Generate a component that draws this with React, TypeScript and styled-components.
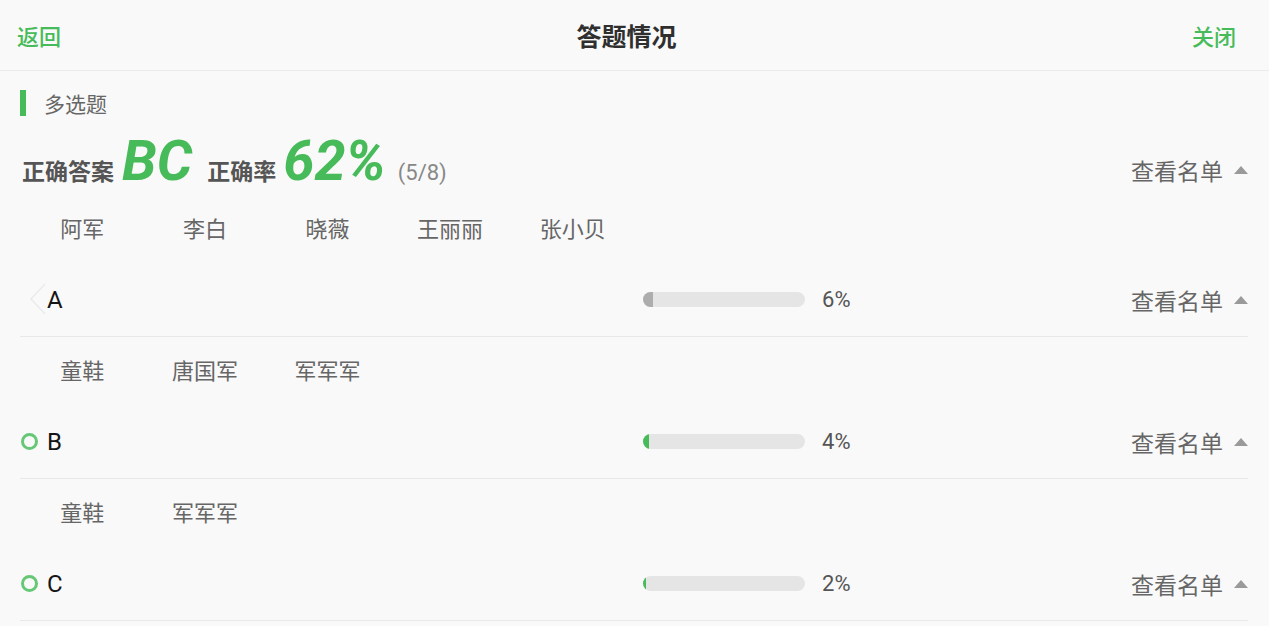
import React from "react";
import styled, { createGlobalStyle } from "styled-components";

const GREEN = "#47bb5a";

const Global = createGlobalStyle`
  html, body { margin: 0; padding: 0; background: #f9f9f9; }
  body { font-family: "Roboto", "Noto Sans CJK SC", sans-serif; }
  * { box-sizing: border-box; }
`;

const Page = styled.div`
  width: 1269px;
  min-height: 626px;
  background: #f9f9f9;
`;

const Header = styled.header`
  height: 71px;
  display: flex;
  align-items: center;
  justify-content: space-between;
  padding: 0 33px 0 17px;
  border-bottom: 1px solid #ebebeb;
`;

const HeaderLink = styled.span`
  font-size: 22px;
  font-weight: 500;
  color: ${GREEN};
`;

const Title = styled.h1`
  margin: 0;
  font-size: 25px;
  font-weight: 700;
  color: #2f2f2f;
`;

const Content = styled.main`
  padding: 0 21px 0 20px;
`;

const SectionTitle = styled.div`
  display: flex;
  align-items: center;
  height: 26px;
  margin-top: 19px;
  font-size: 21px;
  color: #666;
`;

const Bar = styled.span`
  width: 6px;
  height: 26px;
  background: ${GREEN};
  margin-right: 18px;
`;

const AnswerRow = styled.div`
  display: flex;
  align-items: baseline;
  margin-top: 17px;
  height: 62px;
  padding-left: 2px;
`;

const AnswerLabel = styled.span`
  font-size: 23px;
  font-weight: 700;
  color: #555;
`;

const BigValue = styled.span<{ $gap?: number; $lead?: number }>`
  font-size: 56px;
  line-height: 1;
  font-weight: 700;
  font-style: italic;
  color: ${GREEN};
  margin: 0 ${(p) => p.$gap ?? 16}px 0 ${(p) => p.$lead ?? 8}px;
`;

const Count = styled.span`
  font-size: 22px;
  color: #888;
`;

const ViewLink = styled.span<{ $baseline?: boolean }>`
  margin-left: auto;
  display: flex;
  align-items: center;
  font-size: 23px;
  color: #666;
  align-self: ${(p) => (p.$baseline ? "baseline" : "center")};
`;

const Triangle = styled.span`
  width: 0;
  height: 0;
  margin-left: 11px;
  border-left: 7px solid transparent;
  border-right: 7px solid transparent;
  border-bottom: 8px solid #9a9a9a;
`;

const NameGrid = styled.div`
  display: grid;
  grid-auto-flow: column;
  grid-auto-columns: 122.6px;
  justify-content: start;
  align-items: center;
  height: 68px;
  padding: 0 0 5px 1px;
  font-size: 22px;
  color: #666;
`;

const Name = styled.span`
  text-align: center;
`;

const OptionRow = styled.div`
  display: flex;
  align-items: center;
  height: 74px;
  border-bottom: 1px solid #e8e8e8;
`;

const Indicator = styled.span`
  position: relative;
  width: 27px;
  height: 30px;
  display: flex;
  align-items: center;
  flex: 0 0 27px;
`;

const Ring = styled.span`
  width: 17px;
  height: 17px;
  border-radius: 50%;
  border: 3px solid #66c877;
  margin-left: 1px;
`;

const Chevron = styled.svg`
  position: absolute;
  left: 9px;
  top: -3px;
`;

const OptionLabel = styled.span`
  flex: 0 0 596px;
  font-size: 24px;
  color: #151515;
`;

const Track = styled.span`
  flex: 0 0 162px;
  height: 15px;
  border-radius: 8px;
  background: #e5e5e5;
  overflow: hidden;
  display: flex;
`;

const Fill = styled.span<{ $gray?: boolean }>`
  height: 100%;
  background: ${(p) => (p.$gray ? "#adadad" : GREEN)};
`;

const Percent = styled.span`
  margin-left: 17px;
  font-size: 22px;
  color: #555;
`;

type Opt = { key: string; pct: number; correct: boolean; names: string[] };

const options: Opt[] = [
  { key: "A", pct: 6, correct: false, names: ["阿军", "李白", "晓薇", "王丽丽", "张小贝"] },
  { key: "B", pct: 4, correct: true, names: ["童鞋", "唐国军", "军军军"] },
  { key: "C", pct: 2, correct: true, names: ["童鞋", "军军军"] },
];

const ViewList = ({ baseline }: { baseline?: boolean }) => (
  <ViewLink $baseline={baseline}>
    查看名单
    <Triangle />
  </ViewLink>
);

export default function App() {
  return (
    <Page>
      <Global />
      <Header>
        <HeaderLink>返回</HeaderLink>
        <Title>答题情况</Title>
        <HeaderLink>关闭</HeaderLink>
      </Header>
      <Content>
        <SectionTitle>
          <Bar />
          多选题
        </SectionTitle>
        <AnswerRow>
          <AnswerLabel>正确答案</AnswerLabel>
          <BigValue $lead={8} $gap={15}>BC</BigValue>
          <AnswerLabel>正确率</AnswerLabel>
          <BigValue $lead={7} $gap={12}>62%</BigValue>
          <Count>(5/8)</Count>
          <ViewList baseline />
        </AnswerRow>
        {options.map((o) => (
          <React.Fragment key={o.key}>
            <NameGrid>
              {o.names.map((n) => (
                <Name key={n}>{n}</Name>
              ))}
            </NameGrid>
            <OptionRow>
              <Indicator>
                {o.correct ? (
                  <Ring />
                ) : (
                  <Chevron width="18" height="34" viewBox="0 0 18 34">
                    <path d="M16 2 L2 17 L16 32" fill="none" stroke="#ebebeb" strokeWidth="1.6" />
                  </Chevron>
                )}
              </Indicator>
              <OptionLabel>{o.key}</OptionLabel>
              <Track>
                <Fill $gray={!o.correct} style={{ width: `${o.pct}%` }} />
              </Track>
              <Percent>{o.pct}%</Percent>
              <ViewList />
            </OptionRow>
          </React.Fragment>
        ))}
      </Content>
    </Page>
  );
}
